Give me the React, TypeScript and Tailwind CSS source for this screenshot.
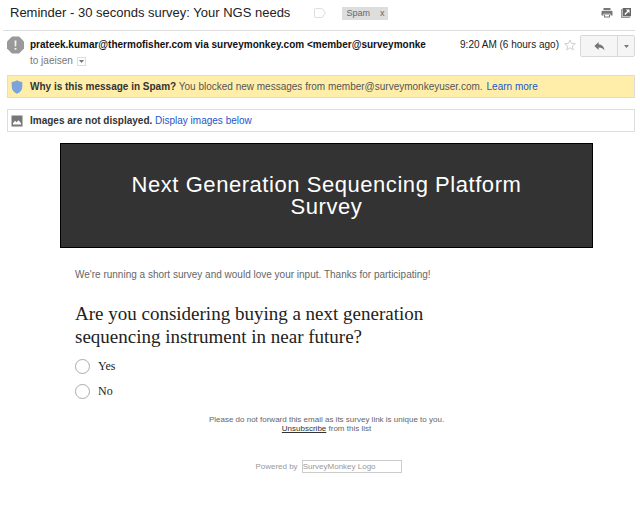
import React from "react";

function TagIcon() {
  return (
    <svg width="12" height="10" viewBox="0 0 12 10" fill="none" stroke="#dcdcdc" aria-hidden="true">
      <path d="M.5 1.5q0-.9 1-.9h6.3q.6 0 1 .5L11.300 5 8.800 8.900q-.4.5-1 .5H1.500q-1 0-1-.9z" />
    </svg>
  );
}

function PrintIcon() {
  return (
    <svg width="12" height="10" viewBox="0 0 12 10" aria-hidden="true">
      <path fill="#777" d="M2.500 0h7v2h-7zM1.600 2.700h8.800Q11.500 2.700 11.500 4v3.600H9.500V5.800h-7v1.800H.5V4Q.5 2.700 1.600 2.700z" />
      <path fill="#777" d="M3 6.500h6v3H3z" />
      <path fill="#fff" d="M4 7h4v1.500H4z" />
    </svg>
  );
}

function PopOutIcon() {
  return (
    <svg width="10" height="10" viewBox="0 0 10 10" aria-hidden="true">
      <path fill="#999" d="M0 1h1.300v7.700H9V10H0z" />
      <path fill="#666" d="M1.700 0H10v8.300H1.700z" />
      <path fill="#fff" d="M4.800 1.500h3.700v3.700L7.300 4 4.300 7l-1-1 3-3z" />
    </svg>
  );
}

function SpamIcon() {
  return (
    <svg className="shrink-0" width="17" height="18" viewBox="0 0 17 18" aria-hidden="true">
      <path fill="#999" d="M5 .5h7l5 5v7l-5 5H5l-5-5v-7z" />
      <path fill="#f2f2f2" d="M7.500 4.500h2l-.3 6H7.800zM7.600 12h1.800v1.800H7.600z" />
    </svg>
  );
}

function StarIcon() {
  return (
    <svg width="12" height="12" viewBox="0 0 12 12" fill="none" stroke="#c4c4c4" strokeWidth=".8" aria-hidden="true">
      <path d="M6 .9l1.400 3.500 3.900.3-3 2.400 1 3.800L6 8.800l-3.300 2.100 1-3.800-3-2.400 3.900-.3z" />
    </svg>
  );
}

function ReplyIcon() {
  return (
    <svg width="11" height="9" viewBox="0 0 11 9" aria-hidden="true">
      <path fill="#777" d="M4.600 0v2.300Q9.800 2.600 10.500 8.500 8.600 5.600 4.600 5.600V8L.4 4z" />
    </svg>
  );
}

function CaretIcon() {
  return (
    <svg width="5" height="3" viewBox="0 0 5 3" aria-hidden="true">
      <path fill="#777" d="M0 0h5L2.500 3z" />
    </svg>
  );
}

function ShieldIcon() {
  return (
    <svg className="shrink-0" width="12" height="14" viewBox="0 0 12 14" aria-hidden="true">
      <path fill="#7ba3dc" d="M6 .3Q8.300 1.800 11.300 2v4.200Q11.300 11.500 6 13.700.7 11.500.7 6.200V2Q3.700 1.800 6 .3z" />
    </svg>
  );
}

function PictureIcon() {
  return (
    <svg className="shrink-0" width="12" height="12" viewBox="0 0 12 12" aria-hidden="true">
      <rect x=".5" y=".5" width="11" height="11" fill="#777" />
      <path fill="#fff" d="M2 9.500V8.300L4 5.800l1.600 1.500 1.900-2L10 8.300v1.200z" />
    </svg>
  );
}

const choices = ["Yes", "No"];

export default function App() {
  return (
    <div className="bg-white pr-[5px] pl-[3px] font-['Liberation_Sans',Arial,sans-serif] text-[10px] text-[#555]">
      <header className="flex h-[31px] items-center border-b border-[#ddd] pr-1 pb-1 pl-[7px]">
        <h1 className="text-[13px] leading-4 whitespace-nowrap text-[#222]">
          Reminder - 30 seconds survey: Your NGS needs
        </h1>
        <button type="button" aria-label="Label" className="ml-6">
          <TagIcon />
        </button>
        <span className="ml-4 flex h-[13px] w-[46px] items-center justify-between bg-[#ddd] px-1 text-[9px] leading-3 text-[#666]">
          <span>Spam</span>
          <button type="button" aria-label="Remove label Spam" className="leading-3">x</button>
        </span>
        <span className="ml-auto flex items-center gap-2">
          <button type="button" aria-label="Print"><PrintIcon /></button>
          <button type="button" aria-label="Open in new window"><PopOutIcon /></button>
        </span>
      </header>

      <section className="flex items-start pt-1 pl-1">
        <div className="pt-px"><SpamIcon /></div>
        <div className="ml-[6px] min-w-0 flex-1 pt-1">
          <p className="overflow-hidden leading-3 font-bold whitespace-nowrap text-[#111]">
            prateek.kumar@thermofisher.com via surveymonkey.com &lt;member@surveymonke
          </p>
          <p className="mt-1 flex items-center gap-1 leading-3 text-[#777]">
            to jaeisen
            <button type="button" aria-label="Show details" className="flex size-[9px] items-center justify-center border border-[#ddd]">
              <CaretIcon />
            </button>
          </p>
        </div>
        <time className="ml-7 pt-1 leading-3 whitespace-nowrap text-[#222]">9:20 AM (6 hours ago)</time>
        <button type="button" aria-label="Star" className="ml-[5px] pt-1"><StarIcon /></button>
        <div className="ml-1 flex h-[22px] rounded-xs border border-[#d8d8d8] bg-[#f5f5f5]">
          <button type="button" aria-label="Reply" className="flex w-9 items-center justify-center"><ReplyIcon /></button>
          <button type="button" aria-label="More" className="flex w-[17px] items-center justify-center border-l border-[#d8d8d8]"><CaretIcon /></button>
        </div>
      </section>

      <section className="mt-2 ml-1 flex h-[23px] items-center border border-[#ddd] bg-[#ffeeaa] pl-[3px]">
        <ShieldIcon />
        <p className="ml-[7px] whitespace-nowrap">
          <b className="text-[#333]">Why is this message in Spam?</b> You blocked new messages from member@surveymonkeyuser.com.
          <a href="#learn" className="ml-1 text-[#2255cc]">Learn more</a>
        </p>
      </section>

      <section className="mt-[11px] ml-1 flex h-[23px] items-center border border-[#ddd] pl-[3px]">
        <PictureIcon />
        <p className="ml-[7px] whitespace-nowrap">
          <b className="text-[#333]">Images are not displayed.</b>{" "}
          <a href="#images" className="text-[#2255cc]">Display images below</a>
        </p>
      </section>

      <main className="mt-[11px] mr-[42px] ml-[57px]">
        <div className="flex h-[105px] items-center justify-center border border-black bg-[#333] px-12">
          <h2 className="text-center text-[22px] leading-[22px] tracking-wide text-white">
            Next Generation Sequencing Platform Survey
          </h2>
        </div>

        <div className="px-[15px] pt-5">
          <p className="leading-[14px] text-[#666]">
            We're running a short survey and would love your input. Thanks for participating!
          </p>
          <fieldset className="mt-5 font-['Liberation_Serif','Times_New_Roman',serif] text-[#222]">
            <legend className="max-w-96 text-[19px] leading-[23px]">
              Are you considering buying a next generation sequencing instrument in near future?
            </legend>
            <div className="mt-[11px] flex flex-col gap-[10px]">
              {choices.map((choice) => (
                <label key={choice} className="flex items-center gap-2 text-[12px] leading-[15px]">
                  <input
                    type="radio"
                    name="answer"
                    className="size-[15px] appearance-none rounded-full border border-[#aaa] bg-white checked:bg-[#555]"
                  />
                  {choice}
                </label>
              ))}
            </div>
          </fieldset>
        </div>

        <footer className="mt-4 text-center text-[8px] leading-[9px] text-[#666]">
          <p>Please do not forward this email as its survey link is unique to you.</p>
          <p><a href="#unsubscribe" className="text-[#333] underline">Unsubscribe</a> from this list</p>
          <div className="mt-[27px] flex items-center justify-center gap-1 pl-1 text-[#999]">
            Powered by
            <span className="h-[13px] w-[100px] border border-[#ccc] text-left leading-[11px]">SurveyMonkey Logo</span>
          </div>
        </footer>
      </main>
    </div>
  );
}
